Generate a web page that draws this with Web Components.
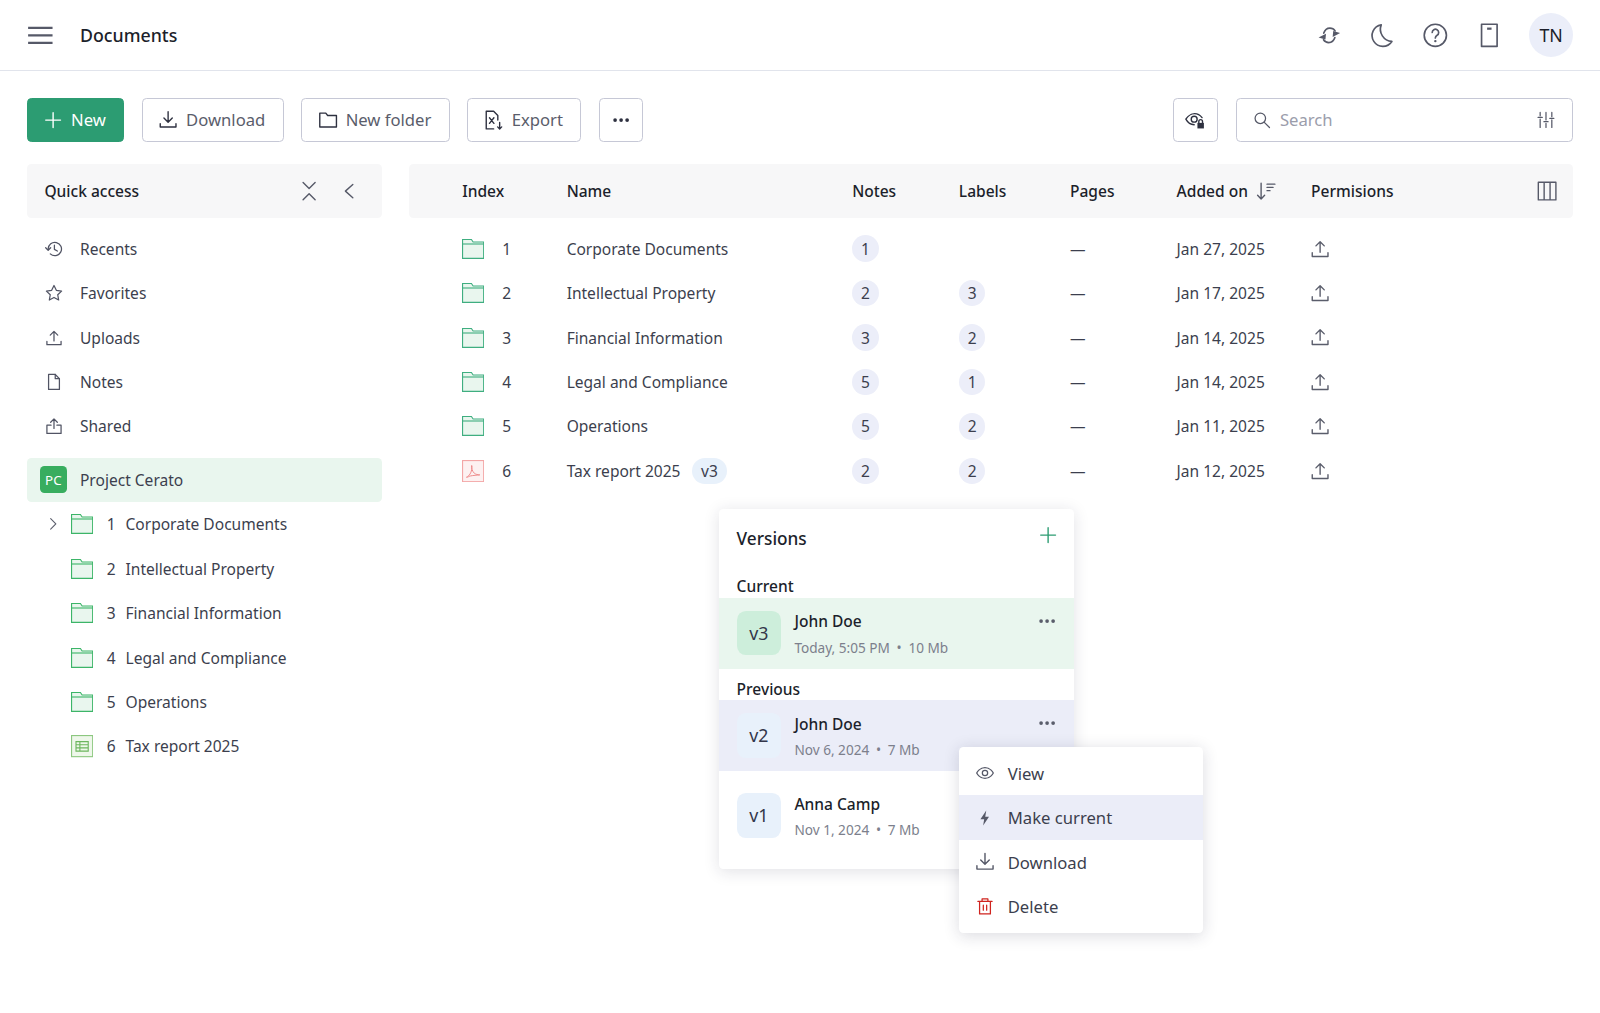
<!DOCTYPE html>
<html lang="en">
<head>
<meta charset="utf-8">
<title>Documents</title>
<style>
  html, body { margin: 0; background: #fff; }
  body {
    zoom: 1.1111;
    font-family: "Noto Sans", "Open Sans", sans-serif;
    font-size: 14px;
    color: #1f2230;
  }
</style>
</head>
<body>
<app-shell></app-shell>

<script>
const S = 'fill="none" stroke="currentColor" stroke-width="1.5" stroke-linecap="round" stroke-linejoin="round"';
const ICONS = {
  menu: `<path d="M1 5.2h22M1 12h22M1 18.8h22" fill="none" stroke="currentColor" stroke-width="2"/>`,
  sync: `<path d="M7 10C8 7 10 5.500 12.500 5.500c2 0 3.500.7 4.700 2.500M17 14c-1 3-3 4.500-5.500 4.500-2 0-3.500-.7-4.700-2.500" ${S} stroke-width="1.800"/><path d="M2.300 14 9 10.500l-.5 5.300zM21.700 10 15 13.500l.5-5.300z" fill="currentColor"/>`,
  moon: `<path d="M11 2.600A9.700 9.700 0 1 0 20.600 17.500 11 11 0 0 1 11 2.600z" ${S} stroke-width="1.800"/>`,
  help: `<circle cx="12" cy="12" r="10" ${S} stroke-width="1.800"/><path d="M9.200 9.400a2.900 2.900 0 1 1 4.400 2.500c-1 .6-1.600 1.200-1.600 2.400" ${S} stroke-width="1.800"/><circle cx="12" cy="17.200" r="1.100" fill="currentColor"/>`,
  book: `<path d="M5 2h14v20H5z" ${S} stroke-width="2" stroke-linecap="butt" stroke-linejoin="miter"/><path d="M10 6h4" fill="none" stroke="currentColor" stroke-width="2"/>`,
  plus: `<path d="M12 4v16M4 12h16" ${S} stroke-width="2"/>`,
  download: `<path d="M12 3v11M7.500 9.800 12 14.300l4.500-4.500" ${S} stroke-width="1.800"/><path d="M3.500 16v3.500h17V16" ${S} stroke-width="1.800"/>`,
  folder: `<path d="M3 4.500h6.500l2 2.500H21v12.500H3z" ${S} stroke-width="1.800"/>`,
  exportx: `<path d="M11.500 21.500H3.500v-19h8l4.500 4.500v5" ${S} stroke-width="1.700"/><path d="M7 9.500l4.800 6M11.800 9.500 7 15.500" ${S} stroke-width="1.700"/><path d="M18 14.500v7M15.800 19.300l2.200 2.200 2.200-2.200" ${S} stroke-width="1.400"/>`,
  dots: `<circle cx="5.500" cy="12" r="2" fill="currentColor"/><circle cx="12" cy="12" r="2" fill="currentColor"/><circle cx="18.500" cy="12" r="2" fill="currentColor"/>`,
  eyelock: `<path d="M2 11s3.600-6 9.500-6c3.700 0 6.400 2.200 8 4.300M11 17c-4.700 0-7.500-3.300-9-6" ${S} stroke-width="1.400"/><circle cx="11" cy="11" r="3.200" ${S} stroke-width="1.400"/><path d="M14.500 15h7v6h-7z" fill="currentColor"/><path d="M16 15v-1.500a2 2 0 0 1 4 0V15" ${S} stroke-width="1.200"/>`,
  search: `<circle cx="10" cy="10" r="6.300" ${S} stroke-width="1.800"/><path d="M14.800 14.800 21 21" ${S} stroke-width="1.800"/>`,
  tune: `<path d="M5 3v4M5 11v10M12 3v9M12 16v5M19 3v5M19 12v9" ${S} stroke-width="1.700"/><path d="M2.500 9h5M9.500 14h5M16.500 10h5" ${S} stroke-width="1.700"/>`,
  collapse: `<path d="M5.500 2.600 12 9.200l6.500-6.600M5.500 21.400 12 14.800l6.500 6.600" ${S} stroke-width="1.500"/>`,
  left: `<path d="M16 4.800 8 12l8 7.200" ${S} stroke-width="1.700"/>`,
  right: `<path d="M9 5l7 7-7 7" ${S} stroke-width="1.600"/>`,
  history: `<path d="M5 12a8 8 0 1 1 2.600 5.900" ${S} stroke-width="1.500"/><path d="M2 10.500 5 13.500l3-3" ${S} stroke-width="1.500"/><path d="M12.500 7.500v5l3.500 2" ${S} stroke-width="1.500"/>`,
  star: `<path d="M12 3l2.800 5.800 6.300.9-4.600 4.400 1.100 6.300L12 17.400l-5.600 3 1.100-6.300L2.900 9.700l6.300-.9z" ${S} stroke-width="1.500"/>`,
  upload: `<path d="M12 15.500V4M7.500 8.500 12 4l4.500 4.500" ${S} stroke-width="1.800"/><path d="M3.500 16v4h17v-4" ${S} stroke-width="1.800"/>`,
  file: `<path d="M5.500 3h8l5 5v13h-13z" ${S} stroke-width="1.600"/><path d="M13.500 3v5h5" ${S} stroke-width="1.600"/>`,
  share: `<path d="M12 15V3.500M8 7.500l4-4 4 4" ${S} stroke-width="1.600"/><path d="M8.500 11h-5v10h17V11h-5" ${S} stroke-width="1.600"/>`,
  sort: `<path d="M6.600 3.500v17M2.800 16.500l3.800 4 3.800-4" ${S} stroke-width="1.700"/><path d="M13 4.500h8.500M13 8h6.500M13 11.500h3.200" ${S} stroke-width="1.400"/>`,
  columns: `<path d="M2.500 2.500h19v19h-19zM8.800 2.500v19M15.200 2.500v19" ${S} stroke-width="1.500" stroke-linecap="butt" stroke-linejoin="miter"/>`,
  eye: `<path d="M2 12s3.600-6.500 10-6.500S22 12 22 12s-3.600 6.500-10 6.500S2 12 2 12z" ${S} stroke-width="1.700"/><circle cx="12" cy="12" r="3.200" ${S} stroke-width="1.700"/>`,
  bolt: `<path d="M13.500 3 6.500 13.500H11L9.800 21l7-10.500h-4.500z" fill="currentColor"/>`,
  trash: `<path d="M3.500 6.500h17M8.500 6.500V3.500h7v3M5.500 6.500v15h13v-15M10 11v6M14 11v6" ${S} stroke-width="1.900"/>`
};
const icon = (name, size = 20) =>
  `<svg width="${size}" height="${size}" viewBox="0 0 24 24" aria-hidden="true" style="display:block;flex:none">${ICONS[name]}</svg>`;

// Coloured file badges used in the table and in the tree
const fileIcon = (kind, tone) => {
  if (kind === "pdf") {
    return `<svg width="20" height="20" viewBox="0 0 20 20" style="display:block;flex:none"><rect x=".5" y=".5" width="19" height="19" fill="#fdf1f1" stroke="#f3a6a6"/><path d="M4 15.500c2.500-1 4.500-4 5-8.500.2-1.500-.2-2.500-.4-2-.6 1.600.8 5.500 2.600 7 .9.800 3.300 1.400 4.800 1.400-2 .2-6.500.500-8.500 1-1.200.300-2.500 1.300-3.500 1.100z" fill="none" stroke="#ee8c8c" stroke-width=".9"/></svg>`;
  }
  if (kind === "sheet") {
    return `<svg width="20" height="20" viewBox="0 0 20 20" style="display:block;flex:none"><rect x=".5" y=".5" width="19" height="19" fill="#eef7ea" stroke="#8cc77f"/><path d="M4.500 6h11v8.500h-11zM4.500 8.800h11M4.500 11.600h11M8 6v8.500" fill="none" stroke="#6cb65e"/></svg>`;
  }
  const c = tone || "#3fae80";
  return `<svg width="20" height="18" viewBox="0 0 20 18" style="display:block;flex:none"><path d="M.5 17.500V.5h8l1.500 2.200h9.500v14.800z" fill="#e9f6ee" stroke="${c}"/><path d="M.5 4.500h19" stroke="${c}" fill="none"/></svg>`;
};

class AppHeader extends HTMLElement {
  constructor() { super(); this.attachShadow({ mode: "open" }); }
  connectedCallback() {
    this.shadowRoot.innerHTML = `
      <style>
        :host { display: flex; align-items: center; height: 63px; padding: 0 24px; border-bottom: 1px solid #e1e4ec; color: #565968; }
        h1 { margin: 0 0 0 24px; font: 500 16px "Noto Sans", sans-serif; color: #1c1f2b; flex: 1; }
        .tools { display: flex; align-items: center; gap: 24px; }
        .avatar { width: 40px; height: 40px; border-radius: 50%; background: #ebeef9; color: #1c1f2b; display: flex; align-items: center; justify-content: center; font-size: 16px; }
      </style>
      ${icon("menu", 24)}
      <h1><slot></slot></h1>
      <div class="tools">
        ${icon("sync", 24)}${icon("moon", 24)}${icon("help", 24)}${icon("book", 24)}
        <div class="avatar">TN</div>
      </div>`;
  }
}

class ToolButton extends HTMLElement {
  constructor() { super(); this.attachShadow({ mode: "open" }); }
  connectedCallback() {
    const name = this.getAttribute("icon");
    this.shadowRoot.innerHTML = `
      <style>
        :host { display: inline-flex; align-items: center; justify-content: center; gap: 6px; box-sizing: border-box; height: 40px; padding: 0 15.500px 0 13px; border: 1px solid #c6c8d6; border-radius: 4px; background: #fff; color: #5a5d6b; font-size: 15px; }
        :host([primary]) { background: #2c9c72; border-color: #2c9c72; color: #fff; }
        :host([square]) { width: 40px; padding: 0; }
        svg { color: #2e3140; }
        :host([primary]) svg { color: #fff; }
      </style>
      ${icon(name, 20)}<slot></slot>`;
  }
}

class SearchBox extends HTMLElement {
  constructor() { super(); this.attachShadow({ mode: "open" }); }
  connectedCallback() {
    this.shadowRoot.innerHTML = `
      <style>
        :host { display: flex; align-items: center; box-sizing: border-box; width: 304px; height: 40px; padding: 0 15px 0 14px; border: 1px solid #c6c8d6; border-radius: 4px; color: #565968; font-size: 15px; }
        span { flex: 1; margin-left: 7px; color: #9b9dab; }
      </style>
      ${icon("search", 18)}<span>Search</span>${icon("tune", 18)}`;
  }
}

class AppToolbar extends HTMLElement {
  constructor() { super(); this.attachShadow({ mode: "open" }); }
  connectedCallback() {
    this.shadowRoot.innerHTML = `
      <style>
        :host { display: flex; align-items: center; gap: 16px; padding: 24px 24px 0; }
        .grow { flex: 1; }
      </style>
      <tool-button primary icon="plus">New</tool-button>
      <tool-button icon="download">Download</tool-button>
      <tool-button icon="folder">New folder</tool-button>
      <tool-button icon="exportx">Export</tool-button>
      <tool-button square icon="dots"></tool-button>
      <div class="grow"></div>
      <tool-button square icon="eyelock"></tool-button>
      <search-box></search-box>`;
  }
}

class NavItem extends HTMLElement {
  constructor() { super(); this.attachShadow({ mode: "open" }); }
  connectedCallback() {
    const name = this.getAttribute("icon");
    this.shadowRoot.innerHTML = `
      <style>
        :host { display: flex; align-items: center; height: 40px; padding-left: 16px; color: #3c3f4e; }
        .ic { width: 32px; color: #515464; }
      </style>
      <div class="ic">${icon(name, 18)}</div><slot></slot>`;
  }
}

class TreeItem extends HTMLElement {
  constructor() { super(); this.attachShadow({ mode: "open" }); }
  connectedCallback() {
    const kind = this.getAttribute("kind") || "folder";
    const arrow = this.hasAttribute("expandable") ? icon("right", 16) : "";
    this.shadowRoot.innerHTML = `
      <style>
        :host { display: flex; align-items: center; height: 40px; padding-left: 16px; color: #3c3f4e; }
        .arrow { width: 24px; color: #5a5d6b; display: flex; justify-content: flex-start; }
        .num { width: 17px; margin-left: 12px; }
      </style>
      <div class="arrow">${arrow}</div>
      ${fileIcon(kind, "#3cb568")}
      <span class="num">${this.getAttribute("num")}</span>
      <slot></slot>`;
  }
}

class SideNav extends HTMLElement {
  constructor() { super(); this.attachShadow({ mode: "open" }); }
  connectedCallback() {
    this.shadowRoot.innerHTML = `
      <style>
        :host { display: block; width: 320px; flex: none; }
        .head { display: flex; align-items: center; gap: 16px; height: 48px; padding: 0 20px 0 16px; background: #f7f7f8; border-radius: 4px; font-weight: 500; color: #1c1f2b; }
        .head span { flex: 1; }
        .head svg { color: #565968; }
        .list { padding-top: 8px; }
        .project { display: flex; align-items: center; height: 40px; margin-top: 8px; padding-left: 12px; background: #e9f6ee; border-radius: 4px; color: #3c3f4e; }
        .badge { width: 24px; height: 24px; margin-right: 12px; border-radius: 4px; background: #38ad5f; color: #fff; font-size: 12px; display: flex; align-items: center; justify-content: center; }
      </style>
      <div class="head"><span>Quick access</span>${icon("collapse", 20)}${icon("left", 20)}</div>
      <div class="list">
        <nav-item icon="history">Recents</nav-item>
        <nav-item icon="star">Favorites</nav-item>
        <nav-item icon="upload">Uploads</nav-item>
        <nav-item icon="file">Notes</nav-item>
        <nav-item icon="share">Shared</nav-item>
        <div class="project"><div class="badge">PC</div>Project Cerato</div>
        <tree-item num="1" expandable>Corporate Documents</tree-item>
        <tree-item num="2">Intellectual Property</tree-item>
        <tree-item num="3">Financial Information</tree-item>
        <tree-item num="4">Legal and Compliance</tree-item>
        <tree-item num="5">Operations</tree-item>
        <tree-item num="6" kind="sheet">Tax report 2025</tree-item>
      </div>`;
  }
}

class CountPill extends HTMLElement {
  constructor() { super(); this.attachShadow({ mode: "open" }); }
  connectedCallback() {
    this.shadowRoot.innerHTML = `
      <style>
        :host { display: inline-flex; align-items: center; justify-content: center; min-width: 24px; height: 24px; box-sizing: border-box; border-radius: 12px; background: #eceef9; color: #3c3f4e; }
        :host([version]) { width: 32px; background: #e8f1fb; margin-left: 10px; }
      </style>
      <slot></slot>`;
  }
}

class DocRow extends HTMLElement {
  constructor() { super(); this.attachShadow({ mode: "open" }); }
  connectedCallback() {
    const a = (n) => this.getAttribute(n);
    const pill = (v) => v ? `<count-pill>${v}</count-pill>` : "";
    const version = a("version") ? `<count-pill version>${a("version")}</count-pill>` : "";
    this.shadowRoot.innerHTML = `
      <style>
        :host { display: grid; grid-template-columns: var(--doc-cols); align-items: center; height: 40px; color: #3c3f4e; }
        .idx, .name { display: flex; align-items: center; }
        .idx span { margin-left: 16px; }
        .up { color: #5a5d6b; margin-left: -2px; }
      </style>
      <div class="idx">${fileIcon(a("kind") || "folder")}<span>${a("num")}</span></div>
      <div class="name">${a("name")}${version}</div>
      <div>${pill(a("notes"))}</div>
      <div>${pill(a("labels"))}</div>
      <div>—</div>
      <div>${a("date")}</div>
      <div class="up">${icon("upload", 20)}</div>`;
  }
}

class DocTable extends HTMLElement {
  constructor() { super(); this.attachShadow({ mode: "open" }); }
  connectedCallback() {
    this.shadowRoot.innerHTML = `
      <style>
        :host { display: block; flex: 1; position: relative; --doc-cols: 94px 257px 96px 100px 96px 121px 1fr; }
        .head { display: grid; grid-template-columns: var(--doc-cols); align-items: center; height: 48px; padding-left: 48px; padding-right: 14px; background: #f7f7f8; border-radius: 4px; font-weight: 500; color: #1c1f2b; }
        .added { display: flex; align-items: center; gap: 6px; }
        .added svg, .perm svg { color: #565968; }
        .perm { display: flex; align-items: center; justify-content: space-between; }
        .body { padding: 8px 0 0 48px; }
      </style>
      <div class="head">
        <div>Index</div><div>Name</div><div>Notes</div><div>Labels</div><div>Pages</div>
        <div class="added">Added on ${icon("sort", 20)}</div>
        <div class="perm">Permisions ${icon("columns", 20)}</div>
      </div>
      <div class="body">
        <doc-row num="1" name="Corporate Documents" notes="1" date="Jan 27, 2025"></doc-row>
        <doc-row num="2" name="Intellectual Property" notes="2" labels="3" date="Jan 17, 2025"></doc-row>
        <doc-row num="3" name="Financial Information" notes="3" labels="2" date="Jan 14, 2025"></doc-row>
        <doc-row num="4" name="Legal and Compliance" notes="5" labels="1" date="Jan 14, 2025"></doc-row>
        <doc-row num="5" name="Operations" notes="5" labels="2" date="Jan 11, 2025"></doc-row>
        <doc-row num="6" kind="pdf" name="Tax report 2025" version="v3" notes="2" labels="2" date="Jan 12, 2025"></doc-row>
      </div>
      <version-panel></version-panel>`;
  }
}

class VersionRow extends HTMLElement {
  constructor() { super(); this.attachShadow({ mode: "open" }); }
  connectedCallback() {
    const a = (n) => this.getAttribute(n);
    const more = this.hasAttribute("more") ? `<div class="more">${icon("dots", 20)}</div>` : "";
    this.shadowRoot.innerHTML = `
      <style>
        :host { display: flex; align-items: center; gap: 12px; height: 64px; padding: 0 16px; position: relative; color: #1c1f2b; }
        :host([tone="current"]) { background: #e9f6ee; }
        :host([tone="hover"]) { background: #ebedf8; }
        .v { width: 40px; height: 40px; border-radius: 8px; background: #e8f1fb; display: flex; align-items: center; justify-content: center; font-size: 16px; color: #33364a; }
        :host([tone="current"]) .v { background: #cdeedb; }
        .txt { padding-top: 2px; }
        .who { font-weight: 500; line-height: 20px; }
        .meta { margin-top: 5px; font-size: 12.250px; line-height: 18px; color: #7c7f8c; }
        .meta i { font-style: normal; margin: 0 6px; }
        .more { position: absolute; right: 15px; top: 11px; color: #5a5d6b; }
      </style>
      <div class="v">${a("v")}</div>
      <div class="txt">
        <div class="who">${a("who")}</div>
        <div class="meta">${a("when")}<i>•</i>${a("size")}</div>
      </div>
      ${more}`;
  }
}

class VersionPanel extends HTMLElement {
  constructor() { super(); this.attachShadow({ mode: "open" }); }
  connectedCallback() {
    this.shadowRoot.innerHTML = `
      <style>
        :host { display: block; position: absolute; left: 279px; top: 310px; width: 320px; padding-bottom: 16px; background: #fff; border-radius: 4px; box-shadow: 0 2px 14px rgba(30, 34, 60, .13); }
        .title { display: flex; align-items: center; justify-content: space-between; height: 60px; padding: 0 14px 7px 16px; box-sizing: border-box; font-size: 15.500px; font-weight: 500; color: #1c1f2b; }
        .title svg { color: #2c9c72; margin-top: -5px; }
        .label { padding: 0 16px; line-height: 20px; font-weight: 500; color: #1c1f2b; }
        .prev { margin-top: 8px; }
        .last { margin-top: 8px; }
      </style>
      <div class="title">Versions ${icon("plus", 20)}</div>
      <div class="label">Current</div>
      <version-row tone="current" more v="v3" who="John Doe" when="Today, 5:05 PM" size="10 Mb"></version-row>
      <div class="label prev">Previous</div>
      <version-row tone="hover" more v="v2" who="John Doe" when="Nov 6, 2024" size="7 Mb"></version-row>
      <version-row class="last" v="v1" who="Anna Camp" when="Nov 1, 2024" size="7 Mb"></version-row>
      <action-menu></action-menu>`;
  }
}

class ActionMenu extends HTMLElement {
  constructor() { super(); this.attachShadow({ mode: "open" }); }
  connectedCallback() {
    const item = (name, text, cls = "") =>
      `<div class="item ${cls}"><span class="ic">${icon(name, 18)}</span>${text}</div>`;
    this.shadowRoot.innerHTML = `
      <style>
        :host { display: block; position: absolute; left: 216px; top: 214px; width: 220px; padding: 4px 0; background: #fff; border-radius: 4px; box-shadow: 0 2px 14px rgba(30, 34, 60, .16); }
        .item { display: flex; align-items: center; gap: 11px; height: 40px; padding-left: 15px; color: #3c3f4e; font-size: 15px; }
        .ic { color: #565968; }
        .on { background: #ebedf8; }
        .dl svg { transform: scale(1.14); }
        .danger .ic { color: #d0241f; }
      </style>
      ${item("eye", "View")}
      ${item("bolt", "Make current", "on")}
      ${item("download", "Download", "dl")}
      ${item("trash", "Delete", "danger")}`;
  }
}

class AppShell extends HTMLElement {
  constructor() { super(); this.attachShadow({ mode: "open" }); }
  connectedCallback() {
    this.shadowRoot.innerHTML = `
      <style>
        :host { display: block; min-height: 911px; overflow: hidden; }
        .content { display: flex; gap: 24px; padding: 20px 24px 0; }
      </style>
      <app-header>Documents</app-header>
      <app-toolbar></app-toolbar>
      <div class="content">
        <side-nav></side-nav>
        <doc-table></doc-table>
      </div>`;
  }
}

customElements.define("app-header", AppHeader);
customElements.define("tool-button", ToolButton);
customElements.define("search-box", SearchBox);
customElements.define("app-toolbar", AppToolbar);
customElements.define("nav-item", NavItem);
customElements.define("tree-item", TreeItem);
customElements.define("side-nav", SideNav);
customElements.define("count-pill", CountPill);
customElements.define("doc-row", DocRow);
customElements.define("doc-table", DocTable);
customElements.define("version-row", VersionRow);
customElements.define("version-panel", VersionPanel);
customElements.define("action-menu", ActionMenu);
customElements.define("app-shell", AppShell);
</script>
</body>
</html>
